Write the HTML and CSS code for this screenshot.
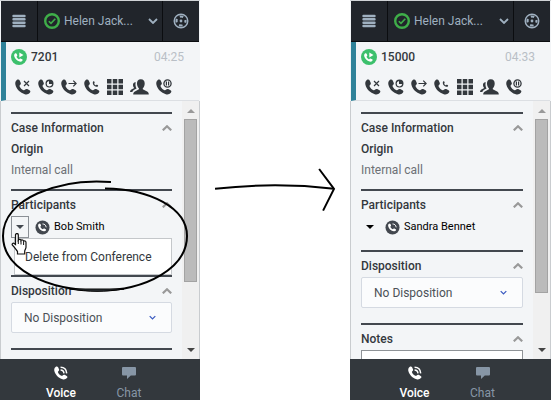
FILE: index.html
```html
<!DOCTYPE html>
<html lang="en">
<head>
  <meta charset="UTF-8">
  <meta name="viewport" content="width=device-width, initial-scale=1.0">
  <title>Delete from Conference</title>
  <link rel="stylesheet" href="styles.css">
</head>
<body>

  <!-- Shared icons -->
  <svg class="sprite" aria-hidden="true">
    <symbol id="handset" viewBox="0 0 16 16">
      <path d="M1.800 1C2.900.2 4.200.5 4.700 1.500l1 2.200c.4.9.1 1.600-.7 2.200-.6.5-.6 1-.2 1.800.7 1.400 1.900 2.600 3.300 3.300.8.4 1.300.4 1.800-.2.7-.9 1.500-1.100 2.300-.7l2.300 1.200c1 .6 1.200 1.600.3 2.500-1.300 1.400-3 2-5 1.400C5.300 14 1.600 10.300.4 5.800 0 3.800.4 2.100 1.800 1z"/>
    </symbol>
    <symbol id="call-end" viewBox="0 0 16 16">
      <use href="#handset"/>
      <path d="M9 2l5 5M14 2l-5 5" stroke="currentColor" stroke-width="1.200"/>
    </symbol>
    <symbol id="call-hold" viewBox="0 0 16 16">
      <use href="#handset"/>
      <path fill-rule="evenodd" d="M11.500.6a4 4 0 1 1 0 8 4 4 0 0 1 0-8zM11 1.900a2.800 2.800 0 1 0 3.200 3.200H11z"/>
    </symbol>
    <symbol id="call-transfer" viewBox="0 0 16 16">
      <use href="#handset"/>
      <path d="M7.500 4.500h7.500M12.300 1.700l2.800 2.800-2.800 2.800" fill="none" stroke="currentColor" stroke-width="1.200"/>
    </symbol>
    <symbol id="call-conference" viewBox="0 0 16 16">
      <use href="#handset"/>
      <use href="#handset" x="8.500" y="2" width="6" height="6"/>
    </symbol>
    <symbol id="keypad" viewBox="0 0 16 16">
      <path d="M0 0h4.500v4.500H0zM5.750 0h4.500v4.500h-4.500zM11.500 0H16v4.500h-4.500zM0 5.750h4.500v4.500H0zM5.750 5.750h4.500v4.500h-4.500zM11.500 5.750H16v4.500h-4.500zM0 11.500h4.500V16H0zM5.750 11.500h4.500V16h-4.500zM11.500 11.500H16V16h-4.500z"/>
    </symbol>
    <symbol id="people" viewBox="0 0 19 16">
      <path d="M5.800 3.200C3.600 3 2.900 4.500 3 6.200c.1 1.300.6 2.100 1.200 2.700L1 10.800c-.7.500-1 1.200-1 2.200h2.300c.3-1 .9-1.800 1.900-2.300l2.400-1.300C5.600 8 5 5.300 5.800 3.200z"/>
      <path d="M10.800.3c2.700 0 3.900 1.800 3.900 4.200 0 2.100-.8 3.800-1.900 4.700v1l4.300 2.200c1.200.7 1.700 1.700 1.700 3.100H3.200c0-1.400.5-2.400 1.700-3.100l4-2.200v-1C7.800 8.300 7 6.600 7 4.500 7 2.100 8.100.3 10.800.3z"/>
    </symbol>
    <symbol id="call-record" viewBox="0 0 16 16">
      <use href="#handset"/>
      <circle cx="11.500" cy="4.500" r="3.600" fill="none" stroke="currentColor" stroke-width="1.300"/>
      <path d="M9.800 2.500h1.200v4H9.800zM12 2.500h1.200v4H12z"/>
    </symbol>
    <symbol id="call-active" viewBox="0 0 16 16">
      <circle cx="8" cy="8" r="8" fill="#3cc06c"/>
      <use href="#handset" x="3" y="4" width="9" height="9" fill="#fff"/>
      <path d="M8.300 3.500l4.200 2.500-4.200 2.500z" fill="#fff"/>
    </symbol>
    <symbol id="call-party" viewBox="0 0 16 16">
      <circle cx="8" cy="8" r="7.500" fill="#43484f"/>
      <use href="#handset" x="3.200" y="3.400" width="9" height="9" fill="#fff"/>
      <path d="M8 4.200c2.200 0 3.700 1.400 3.900 3.600" fill="none" stroke="#fff" stroke-width="1"/>
    </symbol>
    <symbol id="voice" viewBox="0 0 16 16">
      <use href="#handset"/>
      <path d="M7.500 4.600c2.300 0 3.700 1.500 3.900 3.800M7.500 1.500c4.200 0 6.700 2.700 7 6.900" fill="none" stroke="currentColor" stroke-width="1.700"/>
    </symbol>
    <symbol id="chat" viewBox="0 0 14 14">
      <path d="M1 1h12q1 0 1 1v6.500q0 1-1 1H8.800L5 13V9.500H1q-1 0-1-1V2q0-1 1-1z"/>
    </symbol>
    <symbol id="menu" viewBox="0 0 14 14">
      <path d="M1.500 2h11M1.500 5.300h11M1.500 8.700h11M1.500 12h11" stroke="currentColor" stroke-width="2.400" stroke-linecap="round"/>
    </symbol>
    <symbol id="ready" viewBox="0 0 16 16">
      <circle cx="8" cy="8" r="6.800" fill="none" stroke="#3fae49" stroke-width="2.400"/>
      <path d="M4.800 8.200l2.200 2.200 4.300-4.600" fill="none" stroke="#3fae49" stroke-width="1.600"/>
    </symbol>
    <symbol id="support" viewBox="0 0 16 16">
      <circle cx="8" cy="8" r="6.800" fill="none" stroke="currentColor" stroke-width="1.400"/>
      <circle cx="8" cy="8" r="1.400"/>
      <circle cx="8" cy="8" r="4.500" fill="none" stroke="currentColor" stroke-width="2.200" stroke-dasharray="3.530" stroke-dashoffset="1.760"/>
    </symbol>
    <symbol id="chevron-down" viewBox="0 0 10 6">
      <path d="M1 1l4 4 4-4" fill="none" stroke="currentColor" stroke-width="1.800"/>
    </symbol>
    <symbol id="chevron-up" viewBox="0 0 10 6">
      <path d="M.8 5.300L5 1.300l4.200 4" fill="none" stroke="currentColor" stroke-width="2.200"/>
    </symbol>
    <symbol id="caret" viewBox="0 0 8 4">
      <path d="M0 0h8L4 4z"/>
    </symbol>
  </svg>

  <main class="steps">

    <!-- Before: participant menu open -->
    <section class="panel panel-before">
      <header class="topbar">
        <button class="topbar-menu" aria-label="Menu"><svg class="icon-menu"><use href="#menu"/></svg></button>
        <button class="status">
          <svg class="icon"><use href="#ready"/></svg>
          <span class="status-name">Helen Jack...</span>
          <svg class="chevron"><use href="#chevron-down"/></svg>
        </button>
        <button class="topbar-support" aria-label="Support"><svg class="icon"><use href="#support"/></svg></button>
      </header>

      <div class="call">
        <div class="call-info">
          <svg class="icon"><use href="#call-active"/></svg>
          <strong class="call-number">7201</strong>
          <span class="call-time">04:25</span>
        </div>
        <div class="toolbar">
          <button aria-label="End call"><svg><use href="#call-end"/></svg></button>
          <button aria-label="Hold call"><svg><use href="#call-hold"/></svg></button>
          <button aria-label="Transfer"><svg><use href="#call-transfer"/></svg></button>
          <button aria-label="Conference"><svg><use href="#call-conference"/></svg></button>
          <button aria-label="Keypad"><svg><use href="#keypad"/></svg></button>
          <button class="wide" aria-label="Consultation"><svg><use href="#people"/></svg></button>
          <button aria-label="Record"><svg><use href="#call-record"/></svg></button>
        </div>
      </div>

      <div class="scroll-area">
        <div class="sections">
          <section class="block">
            <div class="block-head">
              <h2>Case Information</h2>
              <button aria-label="Collapse"><svg class="chevron"><use href="#chevron-up"/></svg></button>
            </div>
            <dl class="facts">
              <dt>Origin</dt>
              <dd>Internal call</dd>
            </dl>
          </section>

          <section class="block participants open">
            <div class="block-head">
              <h2>Participants</h2>
              <button aria-label="Collapse"><svg class="chevron"><use href="#chevron-up"/></svg></button>
            </div>
            <div class="participant">
              <button class="participant-toggle" aria-label="Participant actions"><svg class="caret"><use href="#caret"/></svg></button>
              <svg class="icon"><use href="#call-party"/></svg>
              <span>Bob Smith</span>
            </div>
            <div class="participant-menu">
              <button>Delete from Conference</button>
            </div>
            <svg class="cursor" viewBox="0 0 17 22" aria-hidden="true">
              <path d="M4.500 1.800c0-1.700 2.800-1.700 2.800 0V7c.6-1 2.500-.8 2.700.5.700-.9 2.400-.6 2.600.7.900-.7 2.400-.2 2.400 1.200v4.800c0 1.400-1 2.300-1.300 3.800v3H6.500v-2.500C5 16.800 3.500 14 1.500 12.300c-1-1.200.5-2.600 1.700-1.800l1.300 1z" fill="#fff" stroke="#111" stroke-width="1.200"/>
              <path d="M7.300 7v4M10 8v3.500M12.600 9v3" stroke="#111" stroke-width="1"/>
            </svg>
            <!-- Hand-drawn highlight -->
            <svg class="highlight" viewBox="0 0 190 116" aria-hidden="true">
              <path d="M111 6C60 2 3 22 3 60c0 34 45 54 95 54.500 49 0 89-23 89-54.500 0-28-37-47-82-47.500" fill="none" stroke="#000" stroke-width="2"/>
              <path d="M70 113c18 3 36 3 54 0-18 0-36 0-54 0z" stroke="#000" stroke-width="1"/>
            </svg>
          </section>

          <section class="block">
            <div class="block-head">
              <h2><label for="disposition1">Disposition</label></h2>
              <button aria-label="Collapse"><svg class="chevron"><use href="#chevron-up"/></svg></button>
            </div>
            <div class="select">
              <select id="disposition1"><option>No Disposition</option></select>
              <svg class="chevron"><use href="#chevron-down"/></svg>
            </div>
          </section>

          <section class="block"></section>
        </div>
        <div class="scrollbar">
          <svg class="caret caret-up"><use href="#caret"/></svg>
          <div class="track"><div class="thumb"></div></div>
          <svg class="caret"><use href="#caret"/></svg>
        </div>
      </div>

      <footer class="tabs">
        <button class="tab active"><svg><use href="#voice"/></svg>Voice</button>
        <button class="tab"><svg><use href="#chat"/></svg>Chat</button>
      </footer>
    </section>

    <div class="arrow">
      <svg viewBox="0 0 122 44" aria-hidden="true">
        <path d="M0 21q61-7 120 0" fill="none" stroke="#000" stroke-width="2"/>
        <path d="M105 1l15 20-11 22" fill="none" stroke="#000" stroke-width="2"/>
      </svg>
    </div>

    <!-- After: one participant left -->
    <section class="panel panel-after">
      <header class="topbar">
        <button class="topbar-menu" aria-label="Menu"><svg class="icon-menu"><use href="#menu"/></svg></button>
        <button class="status">
          <svg class="icon"><use href="#ready"/></svg>
          <span class="status-name">Helen Jack...</span>
          <svg class="chevron"><use href="#chevron-down"/></svg>
        </button>
        <button class="topbar-support" aria-label="Support"><svg class="icon"><use href="#support"/></svg></button>
      </header>

      <div class="call">
        <div class="call-info">
          <svg class="icon"><use href="#call-active"/></svg>
          <strong class="call-number">15000</strong>
          <span class="call-time">04:33</span>
        </div>
        <div class="toolbar">
          <button aria-label="End call"><svg><use href="#call-end"/></svg></button>
          <button aria-label="Hold call"><svg><use href="#call-hold"/></svg></button>
          <button aria-label="Transfer"><svg><use href="#call-transfer"/></svg></button>
          <button aria-label="Conference"><svg><use href="#call-conference"/></svg></button>
          <button aria-label="Keypad"><svg><use href="#keypad"/></svg></button>
          <button class="wide" aria-label="Consultation"><svg><use href="#people"/></svg></button>
          <button aria-label="Record"><svg><use href="#call-record"/></svg></button>
        </div>
      </div>

      <div class="scroll-area">
        <div class="sections">
          <section class="block">
            <div class="block-head">
              <h2>Case Information</h2>
              <button aria-label="Collapse"><svg class="chevron"><use href="#chevron-up"/></svg></button>
            </div>
            <dl class="facts">
              <dt>Origin</dt>
              <dd>Internal call</dd>
            </dl>
          </section>

          <section class="block participants">
            <div class="block-head">
              <h2>Participants</h2>
              <button aria-label="Collapse"><svg class="chevron"><use href="#chevron-up"/></svg></button>
            </div>
            <div class="participant">
              <button class="participant-toggle" aria-label="Participant actions"><svg class="caret"><use href="#caret"/></svg></button>
              <svg class="icon"><use href="#call-party"/></svg>
              <span>Sandra Bennet</span>
            </div>
          </section>

          <section class="block">
            <div class="block-head">
              <h2><label for="disposition2">Disposition</label></h2>
              <button aria-label="Collapse"><svg class="chevron"><use href="#chevron-up"/></svg></button>
            </div>
            <div class="select">
              <select id="disposition2"><option>No Disposition</option></select>
              <svg class="chevron"><use href="#chevron-down"/></svg>
            </div>
          </section>

          <section class="block">
            <div class="block-head">
              <h2><label for="notes">Notes</label></h2>
              <button aria-label="Collapse"><svg class="chevron"><use href="#chevron-up"/></svg></button>
            </div>
            <textarea id="notes" class="notes"></textarea>
          </section>
        </div>
        <div class="scrollbar">
          <svg class="caret caret-up"><use href="#caret"/></svg>
          <div class="track"><div class="thumb"></div></div>
          <svg class="caret"><use href="#caret"/></svg>
        </div>
      </div>

      <footer class="tabs">
        <button class="tab active"><svg><use href="#voice"/></svg>Voice</button>
        <button class="tab"><svg><use href="#chat"/></svg>Chat</button>
      </footer>
    </section>

  </main>

</body>
</html>
```
FILE: styles.css
```css
* {
  box-sizing: border-box;
}

body {
  margin: 0;
  font-family: Roboto, "Liberation Sans", sans-serif;
  font-size: 12px;
  line-height: 16px;
  color: #33383d;
  background-color: #fff;
}

svg {
  display: block;
  fill: currentColor;
  flex: none;
}

button {
  padding: 0;
  border: none;
  background: none;
  color: inherit;
  font: inherit;
  cursor: pointer;
}

.sprite {
  position: absolute;
  width: 0;
  height: 0;
}

.icon {
  width: 16px;
  height: 16px;
}

.icon-menu {
  width: 14px;
  height: 14px;
}

.chevron {
  width: 10px;
  height: 6px;
}

.caret {
  width: 8px;
  height: 4px;
}

/* Page layout */
.steps {
  display: grid;
  grid-template-columns: 200fr 150fr 201fr;
  height: 100vh;
}

.panel {
  display: flex;
  flex-direction: column;
  min-width: 0;
  min-height: 0;
  border-top: 1px solid #d0d3d6;
  background-color: #f3f5f7;
}

/* Top bar */
.topbar {
  display: flex;
  height: 41px;
  margin: 0 1px;
  background-color: #21252b;
  border-bottom: 1px solid #0b0d10;
  color: #9fb0c0;
}

.topbar-menu,
.topbar-support {
  display: flex;
  align-items: center;
  justify-content: center;
  width: 36px;
}

.status {
  flex: 1;
  display: flex;
  align-items: center;
  padding: 0 4px 0 6px;
  border: solid #0b0d10;
  border-width: 0 1px;
}

.status-name {
  flex: 1;
  margin-left: 4px;
  text-align: left;
}

/* Active call */
.call {
  height: 59px;
  margin: 0 1px;
  padding: 7px 15px 0 5px;
  border-left: 5px solid #2f8299;
  border-bottom: 1px solid #dcdfe3;
}

.call-info {
  display: flex;
  align-items: center;
}

.call-number {
  flex: 1;
  margin-left: 4px;
  font-weight: 500;
}

.call-time {
  color: #b9bfc6;
}

.toolbar {
  display: flex;
  gap: 7px;
  margin-top: 14px;
  padding-left: 4px;
}

.toolbar svg {
  width: 16px;
  height: 16px;
}

.toolbar .wide,
.toolbar .wide svg {
  width: 19px;
}

/* Scrolling part */
.scroll-area {
  flex: 1;
  display: flex;
  min-height: 0;
  overflow: hidden;
  border: solid #c9cccf;
  border-width: 0 1px;
}

.sections {
  flex: 1;
  padding: 11px 10px 0;
}

.block {
  padding: 6px 0 15px;
  border-top: 2px solid #43484f;
}

.block-head {
  display: flex;
  justify-content: space-between;
}

.block-head .chevron {
  color: #999;
}

h2,
dt {
  margin: 0;
  font-size: 12px;
  font-weight: 500;
}

.facts {
  margin: 5px 0 -4px;
}

dd {
  margin: 5px 0 0;
  color: #6c7075;
}

/* Participants */
.participants {
  position: relative;
  padding-bottom: 12px;
}

.participants.open {
  padding-bottom: 0;
}

.participant {
  display: flex;
  align-items: center;
  height: 22px;
  margin-top: 3px;
  font-size: 11px;
  color: #000;
}

.participant-toggle {
  display: flex;
  align-items: center;
  justify-content: center;
  width: 18px;
  height: 22px;
}

.participant .icon {
  width: 15px;
  height: 15px;
  margin: 0 4px 0 6px;
}

.open .participant-toggle {
  border: 1px solid #8b9096;
  color: #43484f;
}

.participant-menu {
  height: 37px;
  margin-left: 3px;
  border: 1px solid #c4c7ca;
  background-color: #fff;
}

.participant-menu button {
  width: 100%;
  height: 100%;
  padding-left: 10px;
  text-align: left;
  white-space: nowrap;
}

.cursor {
  position: absolute;
  top: 42px;
  left: 0;
  width: 17px;
  height: 22px;
}

.highlight {
  position: absolute;
  top: -15px;
  left: -11px;
  width: 190px;
  height: 116px;
  pointer-events: none;
}

/* Disposition and notes */
.select {
  display: flex;
  align-items: center;
  margin-top: 3px;
  padding-right: 15px;
  border: 1px solid #d5dae2;
  border-radius: 2px;
  background-color: #fbfcfd;
}

.select select {
  flex: 1;
  min-width: 0;
  height: 29px;
  padding: 0 0 0 12px;
  appearance: none;
  border: none;
  background: none;
  font: inherit;
  color: #4b5157;
}

.select .chevron {
  width: 7px;
  height: 5px;
  color: #3b5bc0;
}

.notes {
  display: block;
  width: 100%;
  height: 60px;
  margin-top: 3px;
  border: 1px solid #8f9397;
  background-color: #fff;
  resize: none;
}

/* Scrollbar */
.scrollbar {
  display: flex;
  flex-direction: column;
  align-items: center;
  width: 17px;
  padding: 8px 0 7px;
  background-color: #f0f0f0;
  color: #444;
}

.scrollbar .caret-up {
  transform: rotate(180deg);
  color: #999;
}

.track {
  flex: 1;
  width: 13px;
  margin: 6px 0;
}

.thumb {
  height: 73%;
  border: 1px solid #a3a3a3;
  background-color: #bbb;
}

.panel-after .thumb {
  height: 78%;
}

/* Bottom tabs */
.tabs {
  display: flex;
  justify-content: center;
  height: 41px;
  padding-right: 10px;
  background-color: #33383d;
  color: #8796a6;
}

.panel-after .tabs {
  padding-right: 4px;
}

.tab {
  display: flex;
  flex-direction: column;
  align-items: center;
  width: 68px;
  padding-top: 7px;
}

.tab svg {
  width: 14px;
  height: 14px;
  margin-bottom: 5px;
}

.tab.active {
  color: #fff;
  font-weight: 500;
}

/* Arrow between the panels */
.arrow {
  padding: 168px 14px 0 15px;
}

.arrow svg {
  width: 100%;
}
```
